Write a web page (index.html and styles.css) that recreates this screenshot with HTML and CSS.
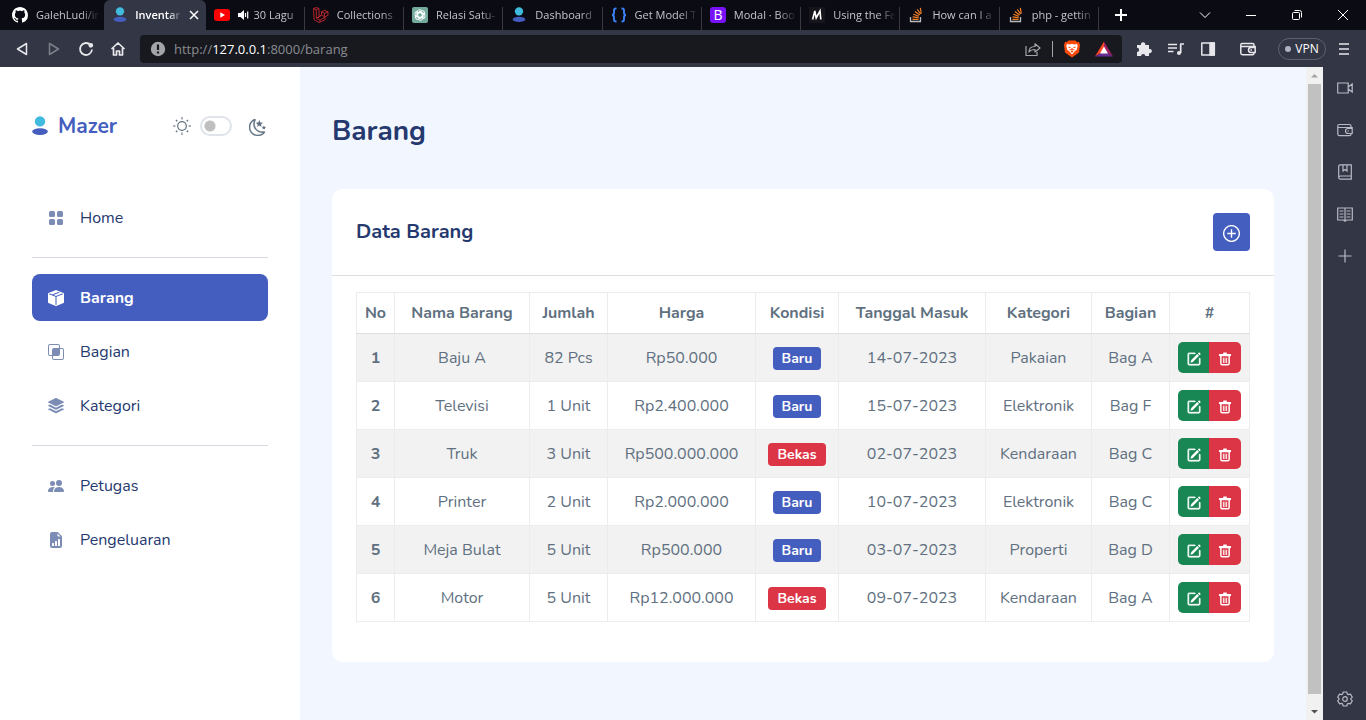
FILE: index.html
```html
<!DOCTYPE html>
<html lang="id">
<head>
<meta charset="utf-8">
<meta name="viewport" content="width=device-width, initial-scale=1">
<title>Inventaris - Barang</title>
<link rel="stylesheet" href="styles.css">
</head>
<body>
<svg class="sprite" aria-hidden="true">
  <symbol id="person" viewBox="0 0 16 20"><circle cx="8" cy="5.4" r="5.2" fill="#41bbdd"/><ellipse cx="8" cy="15.6" rx="7.8" ry="3.3" fill="#435ebe"/></symbol>
  <symbol id="edit" viewBox="0 0 16 16"><path d="M15.502 1.94a.5.5 0 0 1 0 .706L14.459 3.69l-2-2L13.502.646a.5.5 0 0 1 .707 0l1.293 1.293zm-1.75 2.456-2-2L4.939 9.21a.5.5 0 0 0-.121.196l-.805 2.414a.25.25 0 0 0 .316.316l2.414-.805a.5.5 0 0 0 .196-.12l6.813-6.814z"/><path d="M1 13.5A1.5 1.5 0 0 0 2.5 15h11a1.5 1.5 0 0 0 1.5-1.5v-6a.5.5 0 0 0-1 0v6a.5.5 0 0 1-.5.5h-11a.5.5 0 0 1-.5-.5v-11a.5.5 0 0 1 .5-.5H9a.5.5 0 0 0 0-1H2.5A1.5 1.5 0 0 0 1 2.5v11z" stroke="currentColor" stroke-width=".8"/></symbol>
  <symbol id="trash" viewBox="0 0 16 16"><path d="M2 2.200h3.800V1.400Q5.800.6 6.600.6h2.800q.8 0 .8.8v.8H14a1 1 0 0 1 1 1v.6a1 1 0 0 1-1 1H2a1 1 0 0 1-1-1v-.6a1 1 0 0 1 1-1z"/><path d="M3.300 4.500v8.700q0 1.500 1.500 1.500h6.400q1.500 0 1.500-1.500V4.500" fill="none" stroke="currentColor" stroke-width="1.700"/><path d="M6.200 6.500v6.200M8 6.500v6.200M9.800 6.500v6.200" stroke="currentColor" stroke-width="1"/></symbol>
  <symbol id="so" viewBox="0 0 16 16"><path d="M2.5 10v4.500h10V10" fill="none" stroke="#bcbbbb" stroke-width="1.300"/><path d="M4.500 12.300h6M4.600 9.900l6 .8M5.300 7.300l5.600 2M6.900 4.600l4.800 3.500M9.300 2.300l3.300 4.700M12.300.8l1 5.700" fill="none" stroke="#f48024" stroke-width="1.200"/></symbol>
</svg>

<header class="browser">
  <div class="tabbar">
    <div class="tabs">
      <div class="tab tab-plain"><svg class="fav" viewBox="0 0 16 16" fill="#fff"><path d="M8 0C3.580 0 0 3.580 0 8c0 3.540 2.290 6.530 5.470 7.590.4.070.55-.17.55-.38 0-.19-.01-.82-.01-1.490-2.010.37-2.530-.49-2.690-.94-.09-.23-.48-.94-.82-1.130-.28-.15-.68-.52-.01-.53.63-.01 1.080.58 1.230.82.72 1.210 1.870.87 2.330.66.07-.52.28-.87.51-1.070-1.780-.2-3.640-.89-3.640-3.950 0-.87.31-1.590.82-2.150-.08-.2-.36-1.020.08-2.120 0 0 .67-.21 2.200.82.64-.18 1.320-.27 2-.27s1.360.09 2 .27c1.530-1.040 2.200-.82 2.200-.82.44 1.100.16 1.920.08 2.120.51.56.82 1.270.82 2.150 0 3.070-1.870 3.750-3.650 3.950.29.25.54.73.54 1.480 0 1.070-.01 1.930-.01 2.200 0 .21.15.46.55.38A8.010 8.010 0 0 0 16 8c0-4.420-3.580-8-8-8z"/></svg><span class="tab-name">GalehLudi/in</span></div>
      <div class="tab tab-active"><svg class="fav"><use href="#person"/></svg><span class="tab-name">Inventar</span><button class="tab-close" aria-label="Close tab"><svg viewBox="0 0 10 10"><path d="M1 1l8 8M9 1L1 9"/></svg></button></div>
      <div class="tab"><svg class="fav" viewBox="0 0 16 16"><rect y="2" width="16" height="12" rx="3" fill="#f00"/><path d="M6.300 5.200v5.600L11 8z" fill="#fff"/></svg><svg class="speaker" viewBox="0 0 12 12"><path d="M0 4h2.500L6 1v10L2.500 8H0z" fill="#fff"/><path d="M7.500 4v4M9.700 2.500v7" stroke="#fff" stroke-width="1.200"/></svg><span class="tab-name">30 Lagu</span></div>
      <div class="tab"><svg class="fav" viewBox="0 0 16 16" fill="none" stroke="#c5282c" stroke-width=".9" stroke-linejoin="round"><path d="M.6 1.500L3.300.5l2.700 1v8l2.500-1.500V4.800l3-1.500 3.500 1.500v3.500l-3 1.500v3L6 15.500 1 12.500zM.6 1.500l2.700 1.300L6 1.500M3.300 2.800v8.500L6 9.500M3.300 11.300L7 13.200l5-3M7 13.200v2M8.500 4.800l3 1.500L15 4.800M11.500 6.300v3.500l-3-1.800-3.500 3"/></svg><span class="tab-name">Collections</span></div>
      <div class="tab"><svg class="fav" viewBox="0 0 16 16"><rect width="16" height="16" rx="2" fill="#74aa9c"/><g fill="none" stroke="#fff" stroke-width=".9"><path id="petal" d="M5 9.700V5.300a2.600 2.600 0 0 1 4.700-1.500L5.800 6v4.300"/><use href="#petal" transform="rotate(60 8 8)"/><use href="#petal" transform="rotate(120 8 8)"/><use href="#petal" transform="rotate(180 8 8)"/><use href="#petal" transform="rotate(240 8 8)"/><use href="#petal" transform="rotate(300 8 8)"/></g></svg><span class="tab-name">Relasi Satu-</span></div>
      <div class="tab"><svg class="fav"><use href="#person"/></svg><span class="tab-name">Dashboard</span></div>
      <div class="tab"><svg class="fav" viewBox="0 0 16 16" fill="none" stroke="#3b82f6" stroke-width="1.900"><path d="M5.500 1.500H5q-2 0-2 2v2Q3 8 1 8q2 0 2 2.500v2q0 2 2 2h.5M10.500 1.500h.5q2 0 2 2v2Q13 8 15 8q-2 0-2 2.500v2q0 2-2 2h-.5"/></svg><span class="tab-name">Get Model T</span></div>
      <div class="tab"><svg class="fav" viewBox="0 0 16 16"><rect width="16" height="16" rx="3" fill="#7712f8"/><text x="8" y="13" text-anchor="middle" class="fav-b">B</text></svg><span class="tab-name">Modal · Boo</span></div>
      <div class="tab"><svg class="fav" viewBox="0 0 16 16"><rect width="16" height="16" fill="#15151b"/><path d="M3.600 12.500L5.800 4l1.400 7L11 4l.8 8.500" fill="none" stroke="#fff" stroke-width="1.600"/></svg><span class="tab-name">Using the Fe</span></div>
      <div class="tab"><svg class="fav"><use href="#so"/></svg><span class="tab-name">How can I a</span></div>
      <div class="tab"><svg class="fav"><use href="#so"/></svg><span class="tab-name">php - gettin</span></div>
    </div>
    <button class="newtab" aria-label="New tab"><svg viewBox="0 0 12 12"><path d="M6 0v12M0 6h12"/></svg></button>
    <div class="winctl">
      <button aria-label="Search tabs"><svg viewBox="0 0 12 12"><path d="M1 3.500l5 5 5-5"/></svg></button>
      <button aria-label="Minimize"><svg viewBox="0 0 12 12"><path d="M1 6.500h10"/></svg></button>
      <button aria-label="Restore"><svg viewBox="0 0 12 12"><rect x="1.500" y="3.500" width="7" height="7" rx="1"/><path d="M3.500 1.500h5q2 0 2 2v5"/></svg></button>
      <button aria-label="Close"><svg viewBox="0 0 12 12"><path d="M1 1l10 10M11 1L1 11"/></svg></button>
    </div>
  </div>
  <div class="toolbar">
    <button class="tool" aria-label="Back"><svg viewBox="0 0 16 16"><path d="M12.500 2.500v11L3.500 8z"/></svg></button>
    <button class="tool tool-off" aria-label="Forward"><svg viewBox="0 0 16 16"><path d="M3.500 2.500v11l9-5.500z"/></svg></button>
    <button class="tool" aria-label="Reload"><svg viewBox="0 0 16 16"><path d="M12.500 4A6 6 0 1 0 14 8.500" stroke-width="1.800"/><circle cx="12.800" cy="4.300" r="1.600" fill="#e8e8ec"/></svg></button>
    <button class="tool" aria-label="Home"><svg viewBox="0 0 16 16"><path d="M1.500 8L8 2l6.500 6M3.500 7v7h3v-4h3v4h3V7" stroke-width="1.700"/></svg></button>
    <div class="address">
      <svg class="info" viewBox="0 0 16 16"><circle cx="8" cy="8" r="7.200" fill="#a3a5ab"/><path d="M8 3.500V9M8 10.600v2" stroke="#17191f" stroke-width="2.200"/></svg>
      <div class="url" role="textbox" aria-label="Address" contenteditable="true" spellcheck="false">http://<b>127.0.0.1</b>:8000/barang</div>
      <button class="tool" aria-label="Share"><svg class="share" viewBox="0 0 16 16"><path d="M1 5v9.500h11V11M4 11q0-5.500 6-5.500V2.800L15 7l-5 4V8.500q-4 0-6 2.500z"/></svg></button>
      <span class="address-rule"></span>
      <button class="tool" aria-label="Brave Shields"><svg class="brand" viewBox="0 0 16 18"><path d="M4.500.5h7l1.500 1.600 2-.1 1 3-1 7.500L8 17.500 1 12.500 0 5l1-3 2 .1z" fill="#fb4a0a"/><path d="M3 4l3 .5 2-.7 2 .7L13 4l.7 2-1.200 4-2 1.500L8 14.500l-2.500-3-2-1.500-1.200-4z" fill="#fff"/><path d="M4.500 7l2 .7M11.500 7l-2 .7M8 8v1.800M5.500 10l2.500-.5 2.500.5M7 12l1-.8 1 .8" stroke="#fb4a0a" stroke-width="1.100" fill="none"/></svg></button>
      <button class="tool" aria-label="Brave Rewards"><svg class="brand" viewBox="0 0 18 16"><path d="M9 .5L0 15.500 9 10z" fill="#ff4724"/><path d="M9 .5l9 15L9 10z" fill="#9e1f63"/><path d="M0 15.500h18L9 10z" fill="#662d91"/><path d="M9 5.500l4 7H5z" fill="#fff"/></svg></button>
    </div>
    <div class="extensions">
      <button class="tool" aria-label="Extensions"><svg viewBox="0 0 16 16"><path d="M1 4h4a2.200 2.200 0 1 1 4.200 0H13v4a2.200 2.200 0 1 1 0 4.200V15H9.300a2.100 2.100 0 1 0-4.200 0H1v-4a2.100 2.100 0 1 0 0-4.200z" fill="#e8e8ec" stroke="none"/></svg></button>
      <button class="tool" aria-label="Media"><svg viewBox="0 0 16 16"><path d="M0 3.500h9M0 7h9M0 10.500h5.500M12.700 12V3h3.300" stroke-width="1.700"/><circle cx="11" cy="12" r="2" fill="#e8e8ec" stroke="none"/></svg></button>
      <button class="tool" aria-label="Side panel"><svg viewBox="0 0 16 16"><rect x="1.800" y="2" width="12.500" height="12"/><path d="M10 2h4.300v12H10z" fill="#e8e8ec"/></svg></button>
      <button class="tool tool-wallet" aria-label="Wallet"><svg viewBox="0 0 16 16"><use href="#wallet"/></svg></button>
      <button class="vpn"><span class="vpn-dot"></span>VPN</button>
      <button class="tool" aria-label="Menu"><svg viewBox="0 0 16 16"><path d="M3 3h10M3 8h10M3 13h10" stroke-width="1.700"/></svg></button>
    </div>
  </div>
</header>

<div class="window">
  <aside class="sidebar">
    <div class="brandbar">
      <a class="logo" href="#"><svg><use href="#person"/></svg>Mazer</a>
      <div class="theme">
        <svg class="sun" viewBox="0 0 20 20" fill="none" stroke="#607080"><circle cx="10" cy="10" r="4.300" stroke-width="1.200"/><path d="M10 1v2.500M10 16.500V19M1 10h2.500M16.500 10H19" stroke-width="1.500" stroke-opacity=".7"/><path d="M4 4l1.200 1.200M16 4l-1.200 1.200M4 16l1.200-1.200M16 16l-1.200-1.200" stroke-width="1.500"/></svg>
        <input class="switch" type="checkbox" role="switch" aria-label="Dark mode">
        <svg class="moon" viewBox="0 0 16 16" fill="#607080"><path d="M6 .278a.768.768 0 0 1 .080.858 7.208 7.208 0 0 0-.878 3.460c0 4.021 3.278 7.277 7.318 7.277.527 0 1.040-.055 1.533-.16a.787.787 0 0 1 .810.316.733.733 0 0 1-.031.893A8.349 8.349 0 0 1 8.344 16C3.734 16 0 12.286 0 7.710 0 4.266 2.114 1.312 5.124.060A.752.752 0 0 1 6 .278zM4.858 1.311A7.269 7.269 0 0 0 1.025 7.710c0 4.020 3.279 7.276 7.319 7.276a7.316 7.316 0 0 0 5.205-2.162c-.337.042-.68.063-1.029.063-4.610 0-8.343-3.714-8.343-8.290 0-1.167.242-2.278.681-3.286z" stroke="#607080" stroke-width=".4"/><path d="M9.700 1l1 2.300 2.500.2-1.900 1.600.6 2.400-2.200-1.300-2.100 1.300.6-2.400-1.900-1.600 2.500-.2zM14 6l.6 1.400 1.400.1-1.100.9.400 1.500-1.300-.8-1.300.8.400-1.500-1.100-.9 1.400-.1z"/></svg>
      </div>
    </div>
    <nav class="nav">
      <a class="nav-item" href="#"><svg viewBox="0 0 16 16"><rect x="1" y="1" width="6" height="6" rx="1.500"/><rect x="9" y="1" width="6" height="6" rx="1.500"/><rect x="1" y="9" width="6" height="6" rx="1.500"/><rect x="9" y="9" width="6" height="6" rx="1.500"/></svg>Home</a>
      <hr>
      <div class="nav-group">
        <a class="nav-item nav-current" href="#" aria-current="page"><svg viewBox="0 0 16 16"><path d="M15.528 2.973a.75.75 0 0 1 .472.696v8.662a.75.75 0 0 1-.472.696l-7.250 2.900a.75.75 0 0 1-.557 0l-7.250-2.900A.75.75 0 0 1 0 12.331V3.669a.75.75 0 0 1 .471-.696L7.443.184l.010-.003.268-.108a.75.75 0 0 1 .558 0l.269.108.010.003 6.970 2.789ZM10.404 2 4.250 4.461 1.846 3.500 1 3.839v.4l6.500 2.600v7.922l.5.2.5-.2V6.840l6.500-2.600v-.4l-.846-.339L8 5.961 5.596 5l6.154-2.461L10.404 2Z"/></svg>Barang</a>
        <a class="nav-item" href="#"><svg viewBox="0 0 16 16"><path d="M0 2a2 2 0 0 1 2-2h8a2 2 0 0 1 2 2v2h2a2 2 0 0 1 2 2v8a2 2 0 0 1-2 2H6a2 2 0 0 1-2-2v-2H2a2 2 0 0 1-2-2V2zm5 10v2a1 1 0 0 0 1 1h8a1 1 0 0 0 1-1V6a1 1 0 0 0-1-1h-2v5a2 2 0 0 1-2 2H5zm6-8V2a1 1 0 0 0-1-1H2a1 1 0 0 0-1 1v8a1 1 0 0 0 1 1h2V6a2 2 0 0 1 2-2h5z"/></svg>Bagian</a>
        <a class="nav-item" href="#"><svg viewBox="0 0 16 16"><path d="m14.120 10.163 1.715.858c.22.11.22.424 0 .534L8.267 15.340a.598.598 0 0 1-.534 0L.165 11.555a.299.299 0 0 1 0-.534l1.716-.858 5.317 2.659c.505.252 1.100.252 1.604 0l5.317-2.660zM7.733.063a.598.598 0 0 1 .534 0l7.568 3.784a.3.3 0 0 1 0 .535L8.267 8.165a.598.598 0 0 1-.534 0L.165 4.382a.299.299 0 0 1 0-.535L7.733.063z"/><path d="m14.120 6.576 1.715.858c.22.11.22.424 0 .534l-7.568 3.784a.598.598 0 0 1-.534 0L.165 7.968a.299.299 0 0 1 0-.534l1.716-.858 5.317 2.659c.505.252 1.100.252 1.604 0l5.317-2.659z"/></svg>Kategori</a>
      </div>
      <hr>
      <div class="nav-group">
        <a class="nav-item" href="#"><svg viewBox="0 0 16 16"><path d="M7 14s-1 0-1-1 1-4 5-4 5 3 5 4-1 1-1 1H7Zm4-6a3 3 0 1 0 0-6 3 3 0 0 0 0 6Zm-5.784 6A2.238 2.238 0 0 1 5 13c0-1.355.68-2.750 1.936-3.720A6.325 6.325 0 0 0 5 9c-4 0-5 3-5 4s1 1 1 1h4.216ZM4.500 8a2.500 2.500 0 1 0 0-5 2.500 2.500 0 0 0 0 5Z"/></svg>Petugas</a>
        <a class="nav-item" href="#"><svg viewBox="0 0 16 16"><path d="M9.293 0H4a2 2 0 0 0-2 2v12a2 2 0 0 0 2 2h8a2 2 0 0 0 2-2V4.707A1 1 0 0 0 13.707 4L10 .293A1 1 0 0 0 9.293 0zM9.500 3.500v-2l3 3h-2a1 1 0 0 1-1-1zm.5 10v-6a.5.5 0 0 1 .5-.5h1a.5.5 0 0 1 .5.5v6a.5.5 0 0 1-.5.5h-1a.5.5 0 0 1-.5-.5zm-2.500.5a.5.5 0 0 1-.5-.5v-4a.5.5 0 0 1 .5-.5h1a.5.5 0 0 1 .5.5v4a.5.5 0 0 1-.5.5h-1zm-3 0a.5.5 0 0 1-.5-.5v-2a.5.5 0 0 1 .5-.5h1a.5.5 0 0 1 .5.5v2a.5.5 0 0 1-.5.5h-1z"/></svg>Pengeluaran</a>
      </div>
    </nav>
  </aside>

  <main class="main">
    <h1>Barang</h1>
    <section class="card">
      <div class="card-head">
        <h2>Data Barang</h2>
        <button class="add" aria-label="Tambah barang"><svg viewBox="0 0 16 16"><circle cx="8" cy="8" r="7.400"/><path d="M8 4v8M4 8h8"/></svg></button>
      </div>
      <div class="card-body">
        <table>
          <colgroup><col class="c-no"><col class="c-name"><col class="c-short"><col class="c-price"><col class="c-cond"><col class="c-date"><col class="c-cat"><col class="c-short"><col class="c-act"></colgroup>
          <thead><tr><th>No</th><th>Nama Barang</th><th>Jumlah</th><th>Harga</th><th>Kondisi</th><th>Tanggal Masuk</th><th>Kategori</th><th>Bagian</th><th>#</th></tr></thead>
          <tbody>
            <tr><th>1</th><td>Baju A</td><td>82 Pcs</td><td>Rp50.000</td><td><span class="badge">Baru</span></td><td>14-07-2023</td><td>Pakaian</td><td>Bag A</td><td><div class="actions"><button class="edit" aria-label="Edit"><svg><use href="#edit"/></svg></button><button class="delete" aria-label="Hapus"><svg><use href="#trash"/></svg></button></div></td></tr>
            <tr><th>2</th><td>Televisi</td><td>1 Unit</td><td>Rp2.400.000</td><td><span class="badge">Baru</span></td><td>15-07-2023</td><td>Elektronik</td><td>Bag F</td><td><div class="actions"><button class="edit" aria-label="Edit"><svg><use href="#edit"/></svg></button><button class="delete" aria-label="Hapus"><svg><use href="#trash"/></svg></button></div></td></tr>
            <tr><th>3</th><td>Truk</td><td>3 Unit</td><td>Rp500.000.000</td><td><span class="badge badge-used">Bekas</span></td><td>02-07-2023</td><td>Kendaraan</td><td>Bag C</td><td><div class="actions"><button class="edit" aria-label="Edit"><svg><use href="#edit"/></svg></button><button class="delete" aria-label="Hapus"><svg><use href="#trash"/></svg></button></div></td></tr>
            <tr><th>4</th><td>Printer</td><td>2 Unit</td><td>Rp2.000.000</td><td><span class="badge">Baru</span></td><td>10-07-2023</td><td>Elektronik</td><td>Bag C</td><td><div class="actions"><button class="edit" aria-label="Edit"><svg><use href="#edit"/></svg></button><button class="delete" aria-label="Hapus"><svg><use href="#trash"/></svg></button></div></td></tr>
            <tr><th>5</th><td>Meja Bulat</td><td>5 Unit</td><td>Rp500.000</td><td><span class="badge">Baru</span></td><td>03-07-2023</td><td>Properti</td><td>Bag D</td><td><div class="actions"><button class="edit" aria-label="Edit"><svg><use href="#edit"/></svg></button><button class="delete" aria-label="Hapus"><svg><use href="#trash"/></svg></button></div></td></tr>
            <tr><th>6</th><td>Motor</td><td>5 Unit</td><td>Rp12.000.000</td><td><span class="badge badge-used">Bekas</span></td><td>09-07-2023</td><td>Kendaraan</td><td>Bag A</td><td><div class="actions"><button class="edit" aria-label="Edit"><svg><use href="#edit"/></svg></button><button class="delete" aria-label="Hapus"><svg><use href="#trash"/></svg></button></div></td></tr>
          </tbody>
        </table>
      </div>
    </section>
  </main>

  <div class="scrollbar" aria-hidden="true">
    <svg viewBox="0 0 17 17"><path d="M5 10.500h7L8.500 7z" fill="#a3a3a3"/></svg>
    <div class="thumb"></div>
    <svg class="scroll-end" viewBox="0 0 17 17"><path d="M5 7h7l-3.500 3.500z" fill="#505050"/></svg>
  </div>

  <aside class="rail">
    <button aria-label="Talk"><svg viewBox="0 0 16 16"><path d="M.7 3h10.500v10H.7zM11.200 7l4-3v8l-4-3z"/></svg></button>
    <button aria-label="Wallet"><svg viewBox="0 0 16 16"><g id="wallet"><path d="M14 5.500V4q0-1.500-1.500-1.500H2Q.8 2.500.8 4v8q0 1.700 1.700 1.700h10q1.500 0 1.500-1.500v-.7M1 5.500h14.200v6H11a2.500 2.500 0 0 1 0-5h4M10.500 9h1.500"/></g></svg></button>
    <button aria-label="Bookmarks"><svg viewBox="0 0 16 16"><path d="M14.300 12V.8H3.500Q1.700.8 1.700 2.500v11q0 1.700 1.800 1.700h10.800V12H3.500q-1.800 0-1.800 1.500M6 1v6l2-1.500L10 7V1"/></svg></button>
    <button aria-label="Reading list"><svg viewBox="0 0 16 16"><path d="M.7 2h14.600v12H9.500L8 15.200 6.500 14H.7zM8 2v13M2.500 5h4M2.500 8h4M2.500 11h4M9.500 5h4M9.500 8h4M9.500 11h4"/></svg></button>
    <button aria-label="Add to sidebar"><svg viewBox="0 0 16 16"><path d="M8 1.500v13M1.500 8h13"/></svg></button>
    <button class="rail-settings" aria-label="Settings"><svg viewBox="0 0 16 16"><path d="M6.200 1h3.600l.6 2 1.100.6 2-.5 1.800 3.100-1.400 1.500v.6l1.400 1.500-1.800 3.100-2-.5-1.100.6-.6 2H6.200l-.6-2-1.100-.6-2 .5L.7 9.800l1.400-1.500v-.6L.7 6.200l1.800-3.100 2 .5L5.600 3z"/><circle cx="8" cy="8" r="2.300"/></svg></button>
  </aside>
</div>
</body>
</html>
```
FILE: styles.css
```css
* { box-sizing: border-box; }
body {
  margin: 0;
  min-height: 100vh;
  display: flex;
  flex-direction: column;
  background: #f2f7ff;
  color: #607080;
  font: 16px/24px Nunito, "Open Sans", "Noto Sans", sans-serif;
}
svg { display: block; flex: none; width: 16px; height: 16px; }
.sprite { position: absolute; width: 0; height: 0; }
button { padding: 0; border: 0; background: none; color: inherit; font: inherit; display: flex; align-items: center; justify-content: center; }
a { color: inherit; text-decoration: none; }
h1, h2 { margin: 0; color: #25396f; }

/* Browser frame */
.browser { font: 12px/16px "Segoe UI", "Open Sans", sans-serif; color: #c5c5ca; }
.tabbar { display: flex; height: 30px; background: #0b0b14; }
.tabs { display: flex; flex: 0 1 1099px; min-width: 0; font-size: 11px; }
.tab {
  display: flex;
  align-items: center;
  gap: 8px;
  flex: 1 1 99px;
  min-width: 0;
  padding: 0 4px 0 8px;
  background: linear-gradient(#3a3a40, #3a3a40) right bottom / 1px 23px no-repeat;
}
.tab-plain { flex-basis: 104px; padding-left: 12px; background: none; }
.tab-active { flex-basis: 101px; gap: 7px; padding: 0 7px 0 8px; border-radius: 6px 6px 0 0; background: #333645; color: #fff; font-weight: 600; }
.tab-name { flex: 1; min-width: 0; overflow: hidden; white-space: nowrap; mask-image: linear-gradient(to right, #000 70%, transparent); }
.fav-b { font: 14px "Open Sans", sans-serif; fill: #fff; }
.speaker { width: 12px; height: 12px; margin-right: -4px; }
.tab-close svg { width: 10px; height: 10px; stroke: #fff; stroke-width: 1.5; }
.newtab { width: 44px; }
.newtab svg { width: 12px; height: 12px; stroke: #fff; stroke-width: 2; }
.winctl { display: flex; margin-left: auto; }
.winctl button { width: 46px; }
.winctl svg { width: 12px; height: 12px; fill: none; stroke: #fff; }

.toolbar { display: flex; align-items: center; height: 37px; padding-left: 6px; background: #333645; }
.tool { width: 32px; height: 28px; }
.tool svg { fill: none; stroke: #e8e8ec; stroke-width: 1.5; stroke-linejoin: round; }
.tool-off { opacity: .4; }
.address { display: flex; align-items: center; flex: 1; min-width: 0; height: 28px; margin-left: 6px; padding: 0 2px 0 10px; border-radius: 4px; background: #17191f; }
.info { margin-right: 8px; }
.url { flex: 1; min-width: 0; color: #8b8c91; font-size: 13px; line-height: 20px; white-space: nowrap; outline: 0; }
.url b { color: #fff; font-weight: 400; }
.address-rule { width: 1px; height: 16px; margin: 0 3px; background: #a3a5ab; }
.tool .share { stroke: #a3a5ab; stroke-width: 1.2; }
.tool .brand { width: 18px; height: 18px; stroke: none; }
.extensions { display: flex; align-items: center; padding: 0 6px; }
.tool-wallet { width: 48px; }
.vpn { gap: 4px; width: 48px; height: 22px; margin: 0 2px 0 6px; border: 1px solid #5d6070; border-radius: 11px; color: #fff; }
.vpn-dot { width: 6px; height: 6px; border-radius: 50%; background: #b0b2c4; }

/* Window below the toolbar */
.window { display: flex; flex: 1; }
.scrollbar { display: flex; flex-direction: column; width: 17px; background: #f1f1f1; }
.scrollbar svg { width: 17px; height: 17px; }
.thumb { flex: 1; margin: 0 2px; background: #c1c1c1; }
.scrollbar .scroll-end { margin-top: 9px; }
.rail { display: flex; flex-direction: column; width: 43px; background: #333645; }
.rail button { height: 42px; }
.rail svg { width: 16px; height: 16px; fill: none; stroke: #b9bac6; stroke-width: 1.2; }
.rail .rail-settings { margin-top: auto; }

/* Sidebar */
.sidebar { width: 300px; padding: 42px 32px 32px; background: #fff; }
.brandbar { display: flex; align-items: center; justify-content: space-between; height: 34px; margin-bottom: 51px; }
.logo { display: flex; align-items: center; gap: 10px; color: #435ebe; font-size: 21px; font-weight: 700; }
.logo svg { height: 20px; }
.theme { display: flex; align-items: center; gap: 8px; }
.sun { width: 20px; height: 20px; }
.moon { width: 17px; height: 17px; margin: 2px 2px 0 9px; }
.switch { appearance: none; width: 32px; height: 20px; margin: 0; border: 2px solid #dfe3ea; border-radius: 10px; background: radial-gradient(circle at 8px 8px, #bfbfbf 5px, #fff 6px); }
.nav-group { display: flex; flex-direction: column; gap: 7px; }
.nav hr { margin: 16px 0; border: 0; border-top: 1px solid #d6d9df; }
.nav-item { display: flex; align-items: center; gap: 16px; height: 47px; padding: 0 16px; border-radius: 8px; color: #25396f; }
.nav-item svg { fill: #7c8db5; }
.nav-current { background: #435ebe; color: #fff; font-weight: 700; }
.nav-current svg { fill: #fff; }

/* Content */
.main { flex: 1; min-width: 0; padding: 46px 32px; }
h1 { margin-bottom: 40px; font-size: 28px; line-height: 36px; font-weight: 700; }
h2 { font-size: 20px; line-height: 24px; font-weight: 700; }
.card { border-radius: 11px; background: #fff; }
.card-head { display: flex; justify-content: space-between; padding: 24px; border-bottom: 1px solid #dcdee2; }
.card-head h2 { padding-top: 7px; }
.add { width: 37px; height: 38px; border-radius: 4px; background: #435ebe; }
.add svg { width: 17px; height: 17px; margin-top: 2px; fill: none; stroke: #fff; stroke-width: 1.3; }
.card-body { padding: 16px 24px 40px; }
table { width: 100%; table-layout: fixed; border-collapse: collapse; text-align: center; }
.c-no { width: 38px; }
.c-name { width: 135px; }
.c-short { width: 78px; }
.c-price { width: 148px; }
.c-cond { width: 83px; }
.c-date { width: 147px; }
.c-cat { width: 106px; }
.c-act { width: 80px; }
th, td { height: 48px; padding: 0; border: 1px solid #ececec; white-space: nowrap; }
th { font-weight: 700; }
td { font-weight: 400; }
thead th { height: 41px; border-bottom-color: #dcdee0; }
tbody tr:nth-child(odd) { background: #f2f2f2; }
.badge { display: inline-block; padding: 0 9px; border-radius: 4px; background: #435ebe; color: #fff; font-size: 14px; line-height: 23px; font-weight: 700; vertical-align: middle; }
.badge-used { background: #dc3545; }
.actions { display: inline-flex; border-radius: 5px; overflow: hidden; vertical-align: middle; color: #fff; }
.actions button { width: 32px; height: 31px; }
.actions .edit { width: 31px; }
.actions svg { width: 14px; height: 14px; margin-top: 2px; fill: #fff; }
.edit { background: #198754; }
.delete { background: #dc3545; }
```
